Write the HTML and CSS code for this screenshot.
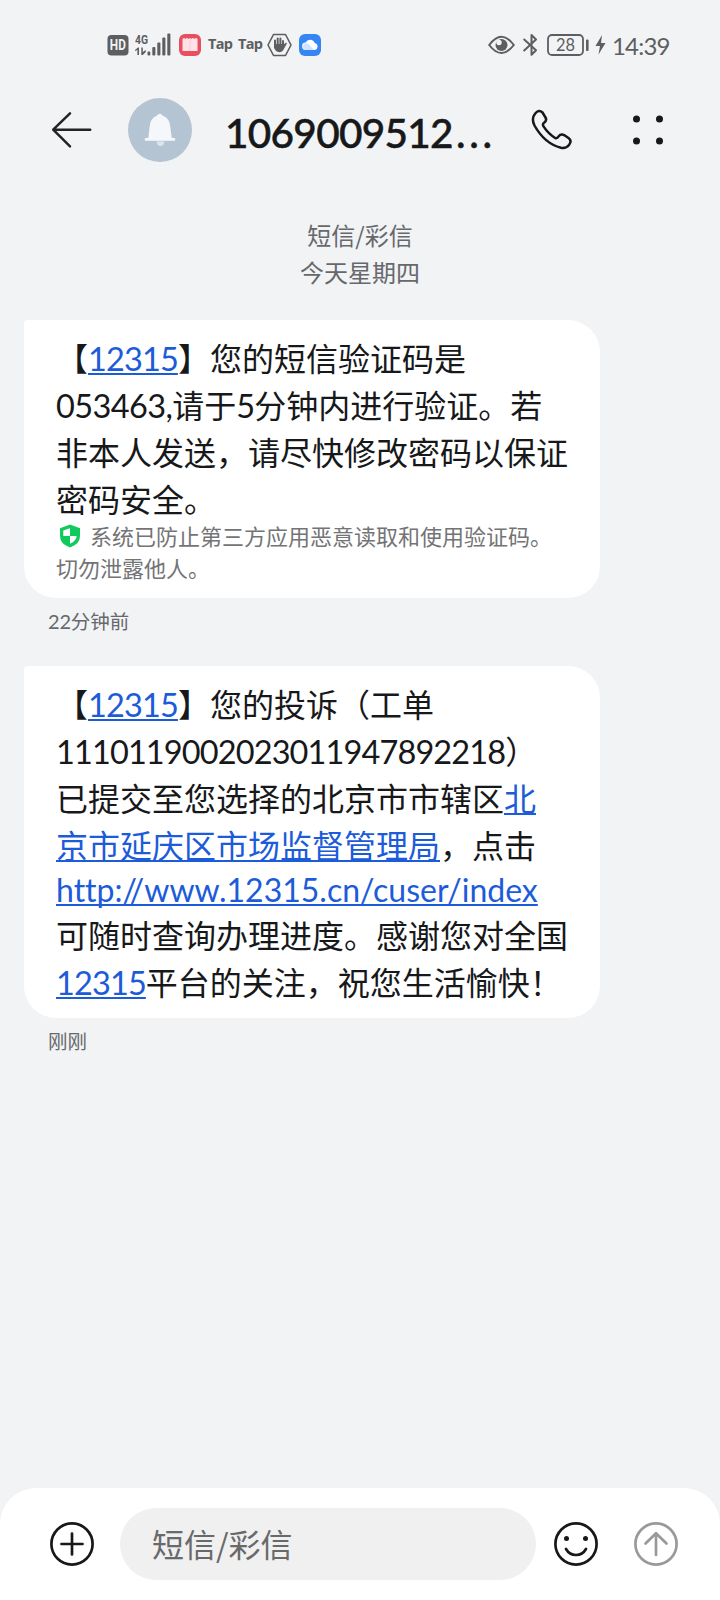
FILE: index.html
```html
<!DOCTYPE html>
<html lang="zh-CN">
<head>
<meta charset="utf-8">
<title>短信</title>
<link rel="stylesheet" href="styles.css">
</head>
<body>
<div class="phone">
  <div class="status">
    <div class="status-left">
      <svg width="22" height="22" viewBox="0 0 22 22"><rect x=".5" y="1" width="21" height="20.5" rx="4" fill="#5d5e60"/><text x="10.8" y="16.2" text-anchor="middle" textLength="16" lengthAdjust="spacingAndGlyphs" class="hd">HD</text></svg>
      <svg class="signal" width="37" height="24" viewBox="0 0 37 24" fill="#5d5e60"><text x="0" y="10.8" textLength="13" lengthAdjust="spacingAndGlyphs" class="net">4G</text><path d="M0 17l3-2.5h1V22H2.4v-5L0 18zM6.3 14.500h1.500v4.500l3-2v2l-3 3H6.300z"/><rect x="12.500" y="18.500" width="2.800" height="4" rx="1"/><rect x="17.300" y="14" width="3.100" height="8.500" rx="1"/><rect x="22.300" y="9.500" width="3.100" height="13" rx="1"/><rect x="27.300" y="4.500" width="3.100" height="18" rx="1"/><rect x="32.300" y="0.500" width="3.100" height="22" rx="1"/></svg>
      <svg class="app" width="22" height="22" viewBox="0 0 22 22"><rect width="22" height="22" rx="6" fill="#e9505f"/><path d="M3.500 5q1.500-2 3 0q1-2 3 0l1.500-1 1.500 1q1-2 3 0q1.500-2 3 0v12h-15z" fill="#ffe2e8"/><path d="M11 5v12" stroke="#f9cdd6" stroke-width="1"/></svg>
      <span class="tap">Tap</span><span class="tap">Tap</span>
      <svg class="hex" width="25" height="24" viewBox="0 0 25 24"><path d="M6.500 1.500h12L24 12l-5.500 10.500h-12L1 12z" fill="none" stroke="#5d5e60" stroke-width="1.600" stroke-linejoin="round"/><path d="M8 7.500v7M10.700 5.500v8M13.400 5.500v8M16 8v7" stroke="#5d5e60" stroke-width="2" stroke-linecap="round"/><path d="M7 11h10l2.500-1.500q.8.600 0 1.700L16 17.500q-1.500 2-4.500 1.600Q8 18.600 7 14z" fill="#5d5e60"/></svg>
      <svg class="cloud" width="22" height="22" viewBox="0 0 22 22"><rect width="22" height="22" rx="6" fill="#3585f3"/><path d="M7 16a3.700 3.700 0 0 1-.4-7.400A5 5 0 0 1 15.800 9a3.600 3.600 0 0 1 0 7z" fill="#fff"/><path d="M3.800 12.500a3.600 3.600 0 0 1 6.500-1.800L15 16H7q-3-.3-3.200-3.500z" fill="#cfe4ff"/></svg>
    </div>
    <div class="status-right">
      <svg width="27" height="20" viewBox="0 0 27 20"><path d="M1.200 10Q13.500-6.500 25.800 10Q13.500 26 1.200 10z" fill="none" stroke="#5d5e60" stroke-width="2"/><circle cx="13.500" cy="10" r="6" fill="#5d5e60"/><circle cx="11" cy="7.500" r="2.700" fill="#f1f3f5"/></svg>
      <svg class="bt" width="15" height="24" viewBox="0 0 15 24"><path d="M1.200 6.500L13 17.300 8.500 21.800V2L13 6.500 1.200 17.500" fill="none" stroke="#5d5e60" stroke-width="2" stroke-linejoin="round" stroke-linecap="round"/></svg>
      <svg class="battery" width="43" height="22" viewBox="0 0 43 22"><rect x="1" y="1" width="35" height="20" rx="4" fill="none" stroke="#5d5e60" stroke-width="1.800"/><rect x="39" y="5.500" width="2.600" height="11.500" rx="1" fill="#5d5e60"/><text x="18.500" y="17.300" text-anchor="middle" textLength="19" lengthAdjust="spacingAndGlyphs" class="pct">28</text></svg>
      <svg class="bolt" width="11" height="20" viewBox="0 0 11 20"><path d="M7 0L.5 11H5L3.500 19.500 10.500 8H6z" fill="#5d5e60"/></svg>
      <span class="clock">14:39</span>
    </div>
  </div>

  <div class="header">
    <svg class="back" width="42" height="38" viewBox="0 0 42 38"><path d="M19 2.300L2.200 18.700 19 35.300M2.200 18.800h37" fill="none" stroke="#222324" stroke-width="2.500" stroke-linecap="round" stroke-linejoin="round"/></svg>
    <div class="avatar"><svg width="64" height="64" viewBox="0 0 64 64"><path d="M28.500 43.500h8q-.8 4.500-4 4.500t-4-4.500z" fill="#dce5ed"/><path d="M31.800 15.800q1.500 0 3 2Q41.500 20 42.300 29L43.800 40h2.200a1.400 1.400 0 0 1 0 2.800H18A1.400 1.400 0 0 1 18 40h2.300l1.300-11q.8-9 7.200-11.200 1.500-2 3-2z" fill="#f5f8fa"/></svg></div>
    <div class="title">1069009512<span class="dots">...</span></div>
    <svg class="call" width="42" height="42" viewBox="0 0 42 42"><path d="M4.200 4.500Q7.800 0 11.500 3.500L14.500 8.500Q16.300 11.500 12.800 14 11.300 15 12.500 17.400 17.500 25 24.500 29.200 26.500 29.500 27.500 27.500 30 24.300 33.500 26.300L37.800 29.200Q41.200 32 38 36 35 39.800 30 38.800 13.500 34.500 3.500 16.500 0 9.500 4.200 4.500z" fill="none" stroke="#17181a" stroke-width="2.500" stroke-linejoin="round"/></svg>
    <svg class="more" width="32" height="30" viewBox="0 0 32 30" fill="#17181a"><circle cx="4.500" cy="4" r="3.500"/><circle cx="27.500" cy="4" r="3.500"/><circle cx="4.500" cy="26" r="3.500"/><circle cx="27.500" cy="26" r="3.500"/></svg>
  </div>

  <div class="thread">
    <div class="meta"><div>短信/彩信</div><div>今天星期四</div></div>

    <div class="bubble first">
      <div class="line">【<a class="num">12315</a>】您的短信验证码是</div>
      <div class="line"><span class="num code">053463,</span>请于<span class="num">5</span>分钟内进行验证。若</div>
      <div class="line">非本人发送，请尽快修改密码以保证</div>
      <div class="line">密码安全。</div>
      <div class="notices">
        <div class="notice"><svg width="22" height="24" viewBox="0 0 22 24"><path d="M11 .5l10 3.700V12q0 8-10 11.500Q1 20 1 12V4.200z" fill="#10cb5b"/><path d="M11 4.200V12H4.300V6.500zM11 12h6.700q-.3 5-6.700 7.800z" fill="#fff"/></svg>系统已防止第三方应用恶意读取和使用验证码。</div>
        <div class="notice">切勿泄露他人。</div>
      </div>
    </div>
    <div class="time"><span class="time-num">22</span>分钟前</div>

    <div class="bubble second">
      <div class="line">【<a class="num">12315</a>】您的投诉（工单</div>
      <div class="line"><span class="num">1110119002023011947892218</span>）</div>
      <div class="line">已提交至您选择的北京市市辖区<a>北</a></div>
      <div class="line"><a>京市延庆区市场监督管理局</a>，点击</div>
      <div class="line url-line"><a class="url">http://www.12315.cn/cuser/index</a></div>
      <div class="line">可随时查询办理进度。感谢您对全国</div>
      <div class="line"><a class="num">12315</a>平台的关注，祝您生活愉快！</div>
    </div>
    <div class="time">刚刚</div>
  </div>

  <div class="composer">
    <svg width="44" height="44" viewBox="0 0 44 44" fill="none" stroke="#17181a" stroke-width="2.700" stroke-linecap="round"><circle cx="22" cy="22" r="20.600"/><path d="M11.500 22h21M22 11.500v21"/></svg>
    <div class="input">短信/彩信</div>
    <svg class="smile" width="44" height="44" viewBox="0 0 44 44" fill="none" stroke="#17181a" stroke-width="2.700" stroke-linecap="round"><circle cx="22" cy="22" r="20.600"/><path d="M12 27q3.500 6 10 6t10-6"/><circle cx="12.500" cy="16.500" r="2.500" fill="#17181a" stroke="none"/><circle cx="31.500" cy="16.500" r="2.500" fill="#17181a" stroke="none"/></svg>
    <svg class="send" width="44" height="44" viewBox="0 0 44 44" fill="none" stroke="#999" stroke-width="2.700" stroke-linecap="round" stroke-linejoin="round"><circle cx="22" cy="22" r="20.600"/><path d="M22 33V11.500M11.500 21.500L22 11.200l10.500 10.300"/></svg>
  </div>
</div>
</body>
</html>
```
FILE: styles.css
```css
* { box-sizing: border-box; }
body {
  margin: 0;
  background: #f1f3f5;
  color: #17181a;
  font-family: "Noto Sans CJK SC", sans-serif;
  text-spacing-trim: space-all;
}
svg { display: block; flex: none; }
.phone { width: 720px; height: 1600px; display: flex; flex-direction: column; overflow: hidden; }

.status { height: 90px; display: flex; justify-content: space-between; padding: 0 50px 0 107px; flex: none; }
.status-left, .status-right { display: flex; align-items: center; height: 90px; color: #5d5e60; white-space: nowrap; }
.hd { font: 700 14px Roboto, sans-serif; fill: #f1f3f5; }
.net { font: 700 13px Roboto, sans-serif; }
.signal { margin-left: 6px; }
.app { margin-left: 7px; }
.tap { font: 700 14.5px/20px "Open Sans", sans-serif; width: 24px; margin-left: 6px; letter-spacing: -0.7px; padding-bottom: 2px; }
.app + .tap { margin-left: 7px; }
.hex { margin-left: 5px; }
.cloud { margin-left: 7px; }
.bt { margin-left: 8px; }
.battery { margin-left: 9px; }
.pct { font: 400 17px Lato, sans-serif; fill: #5d5e60; }
.bolt { margin-left: 5px; }
.clock { font: 400 24px/30px Lato, sans-serif; letter-spacing: -0.8px; margin-left: 6px; width: 58px; padding-top: 1px; }

.header { height: 80px; display: flex; align-items: center; padding-left: 51px; flex: none; }
.avatar { width: 64px; height: 64px; margin-left: 35px; border-radius: 50%; background: #b5c4d2; }
.title { width: 272px; margin-left: 33px; padding-top: 5px; font: 500 40.5px/48px Lato, sans-serif; letter-spacing: -0.7px; -webkit-text-stroke: 0.5px #17181a; white-space: nowrap; flex: none; }
.dots { letter-spacing: 3.7px; margin-left: 3px; }
.call { margin-left: 34px; }
.more { margin-left: 59px; }

.thread { flex: 1; padding: 46px 24px 0; }
.meta { height: 104px; text-align: center; font-size: 24px; line-height: 37px; color: #66686b; }
.bubble { width: 576px; padding: 14px 0 0 32px; border-radius: 4px 32px 32px 32px; background: #fff; white-space: nowrap; }
.first { height: 278px; }
.second { height: 352px; }
.line { height: 47px; line-height: 47px; font-size: 32px; }
.line a { color: #1c5bd9; text-decoration: underline; text-decoration-thickness: 2px; text-underline-offset: 2px; text-decoration-skip-ink: none; }
.num { font-family: Lato, sans-serif; font-size: 32.5px; letter-spacing: -0.88px; }
.code { letter-spacing: -0.6px; }
.url-line { height: 43px; line-height: 40px; }
.url { font-family: Lato, sans-serif; font-size: 32px; font-variant-ligatures: none; }
.notices { margin-top: -3px; }
.notice { display: flex; align-items: center; height: 32px; font-size: 22px; color: #737476; }
.notice svg { margin: 2px 9px 0 3px; }
.time { height: 68px; padding: 8px 0 0 24px; font-size: 19.5px; line-height: 30px; color: #66686b; }
.time-num { font-family: Lato, sans-serif; font-size: 20px; letter-spacing: -0.2px; }

.composer { height: 112px; display: flex; align-items: center; padding-left: 50px; border-radius: 36px 36px 0 0; background: #fff; flex: none; }
.input { width: 416px; height: 72px; margin: 0 18px 0 26px; padding-left: 32px; border-radius: 36px; background: #f0f0f0; color: #68696b; font-size: 32px; line-height: 70px; }
.send { margin-left: 36px; }
```
